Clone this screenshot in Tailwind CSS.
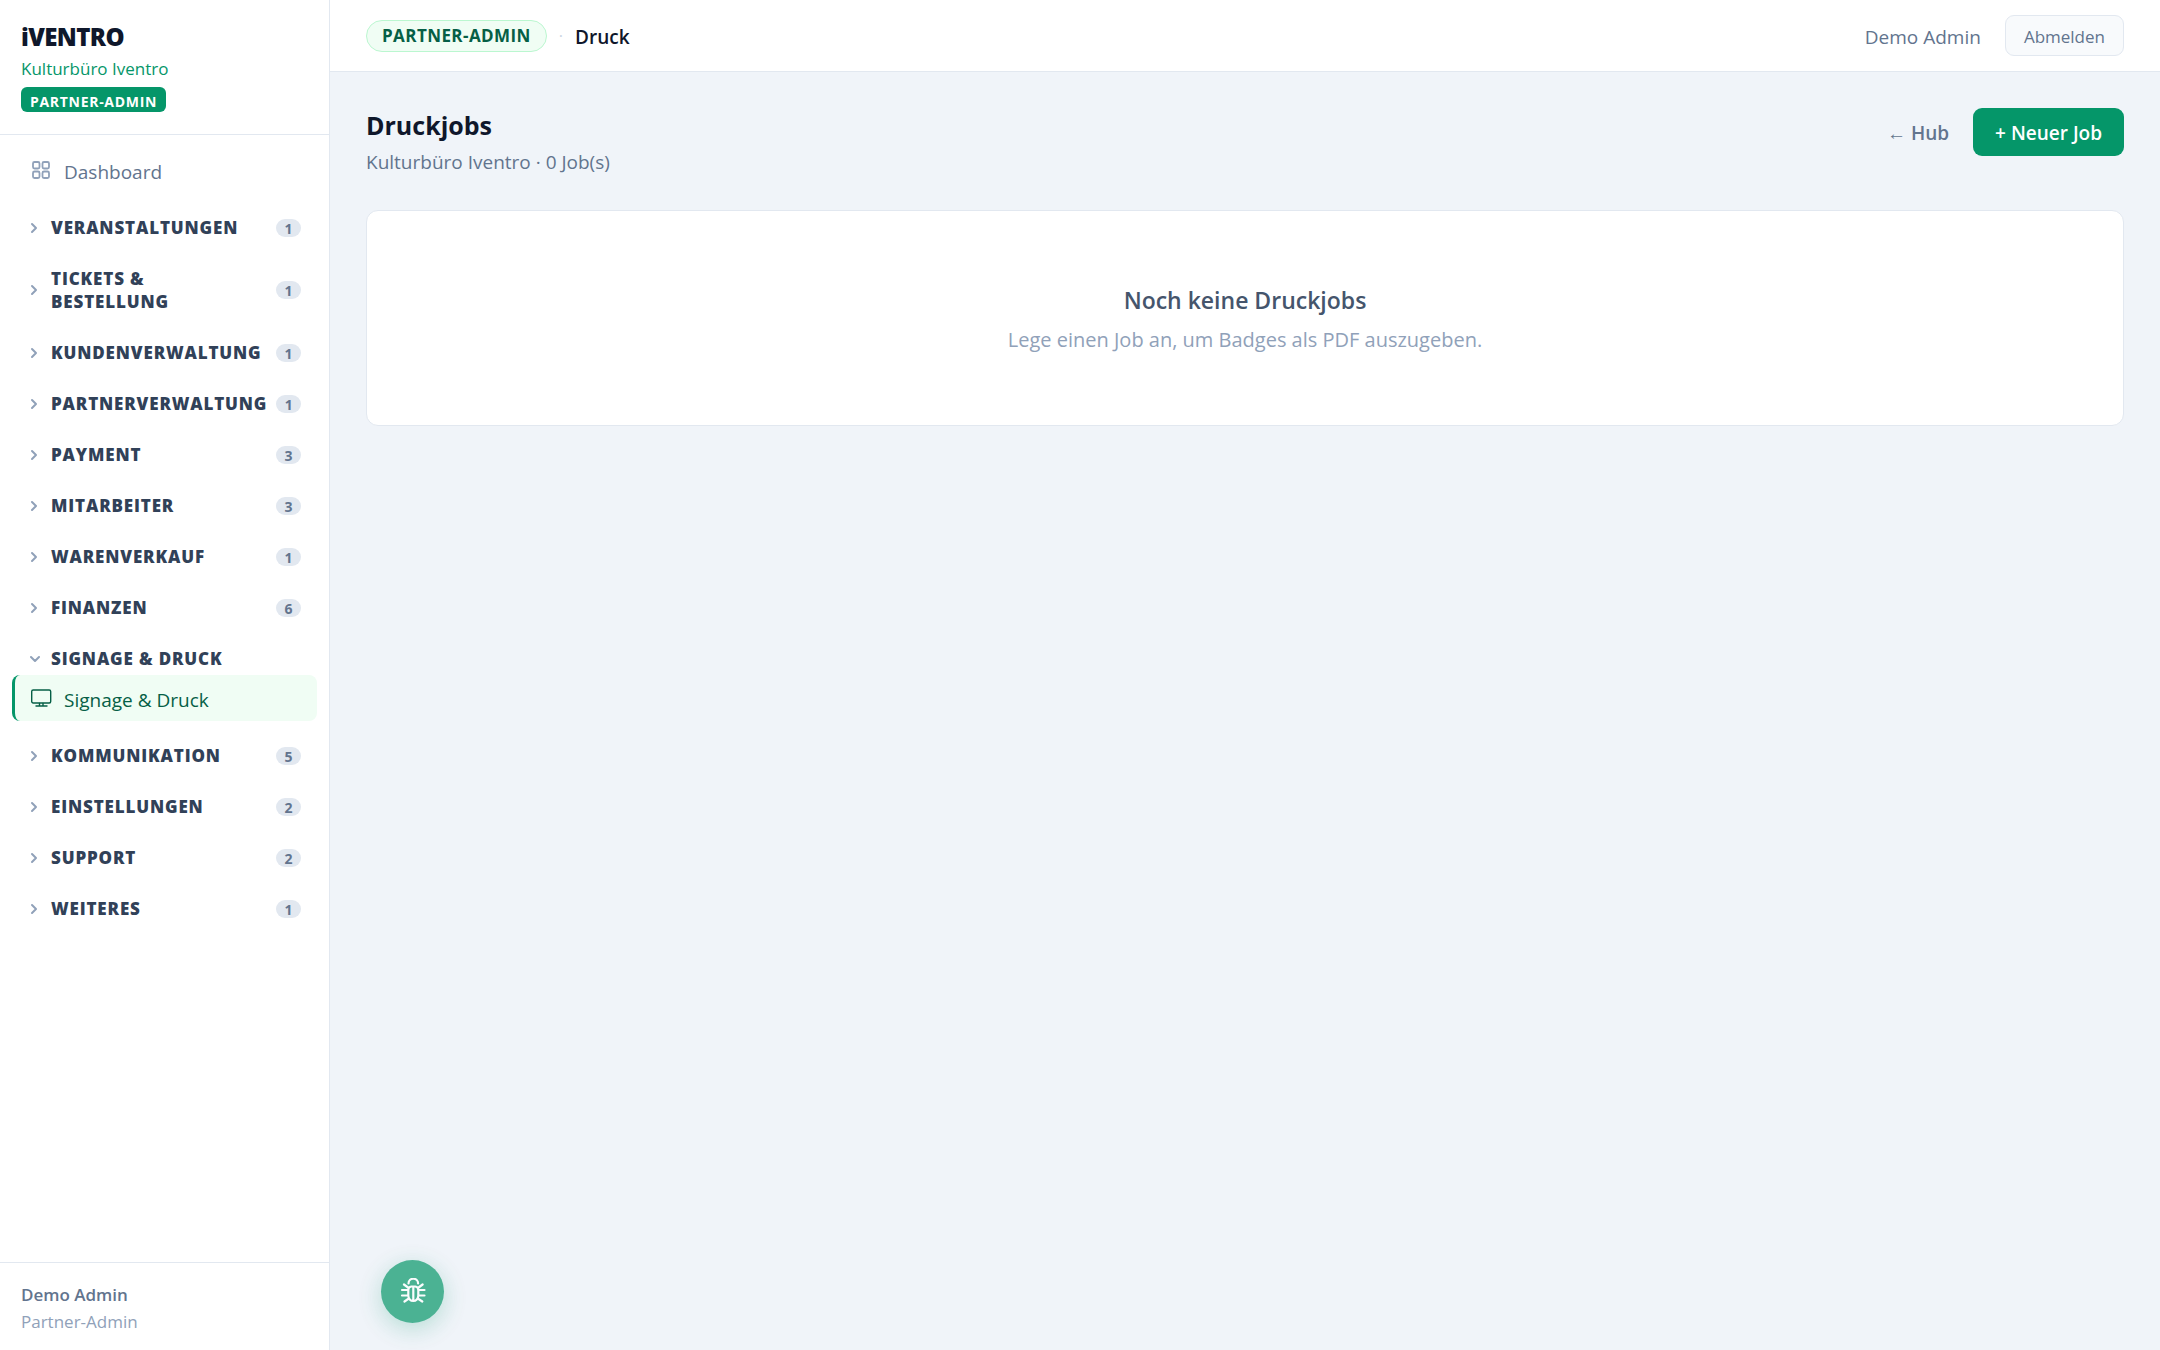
<!DOCTYPE html>
<html lang="de">
<head>
    <meta charset="UTF-8">
    <meta name="viewport" content="width=device-width, initial-scale=1.0">
    <title>Druckjobs – iVENTRO</title>
    <script src="https://cdn.jsdelivr.net/npm/@tailwindcss/browser@4"></script>
</head>
<body class="flex min-h-screen bg-[#f0f4f9] font-['Open_Sans',sans-serif] text-slate-900">
    <!-- Icons -->
    <svg class="hidden">
        <symbol id="chevron" viewBox="0 0 12 12">
            <path d="M2 2l4 4-4 4" fill="none" stroke="currentColor" stroke-width="2" stroke-linecap="round" stroke-linejoin="round"/>
        </symbol>
        <symbol id="chevron-down" viewBox="0 0 12 12">
            <path d="M1 4l4 4 4-4" fill="none" stroke="currentColor" stroke-width="2" stroke-linecap="round" stroke-linejoin="round"/>
        </symbol>
    </svg>

    <!-- Sidebar -->
    <aside class="flex w-[330px] shrink-0 flex-col border-r border-slate-200 bg-white">
        <div class="flex flex-col items-start border-b border-slate-200 px-[21px] pt-[21px] pb-[22px]">
            <div class="text-2xl leading-8 font-extrabold tracking-tight">iVENTRO</div>
            <div class="text-[17px] leading-8 font-medium text-[#059669]">Kulturbüro Iventro</div>
            <span class="mt-[2px] rounded-md bg-[#059669] px-[9px] pt-1 text-sm leading-[21px] font-bold tracking-wider text-white">PARTNER-ADMIN</span>
        </div>

        <nav class="flex flex-1 flex-col gap-[18px] px-3 pt-3">
            <a href="#" class="flex h-[46px] items-center gap-3 pl-[19px] text-[19px] font-medium text-slate-500">
                <svg class="size-[21px] text-slate-400" viewBox="0 0 21 21" fill="none" stroke="currentColor" stroke-width="1.8"><rect x="2" y="2" width="6.500" height="6.500" rx="1.500"/><rect x="11.500" y="2" width="6.500" height="6.500" rx="1.500"/><rect x="2" y="11.500" width="6.500" height="6.500" rx="1.500"/><rect x="11.500" y="11.500" width="6.500" height="6.500" rx="1.500"/></svg>
                <span class="pt-1">Dashboard</span>
            </a>
            <button class="flex items-center gap-[9px] py-[5px] pr-4 pl-[18px] text-left text-[17px] leading-[23px] font-extrabold tracking-wider text-slate-700">
                <svg class="size-3 shrink-0 text-slate-400"><use href="#chevron"/></svg>
                <span class="flex-1">VERANSTALTUNGEN</span>
                <span class="w-[25px] rounded-full bg-slate-200 pt-px text-center text-sm leading-[17px] font-bold tracking-normal text-slate-500">1</span>
            </button>
            <button class="flex items-center gap-[9px] py-[5px] pr-4 pl-[18px] text-left text-[17px] leading-[23px] font-extrabold tracking-wider text-slate-700">
                <svg class="size-3 shrink-0 text-slate-400"><use href="#chevron"/></svg>
                <span class="flex-1">TICKETS &amp;<br>BESTELLUNG</span>
                <span class="w-[25px] rounded-full bg-slate-200 pt-px text-center text-sm leading-[17px] font-bold tracking-normal text-slate-500">1</span>
            </button>
            <button class="flex items-center gap-[9px] py-[5px] pr-4 pl-[18px] text-left text-[17px] leading-[23px] font-extrabold tracking-wider text-slate-700">
                <svg class="size-3 shrink-0 text-slate-400"><use href="#chevron"/></svg>
                <span class="flex-1">KUNDENVERWALTUNG</span>
                <span class="w-[25px] rounded-full bg-slate-200 pt-px text-center text-sm leading-[17px] font-bold tracking-normal text-slate-500">1</span>
            </button>
            <button class="flex items-center gap-[9px] py-[5px] pr-4 pl-[18px] text-left text-[17px] leading-[23px] font-extrabold tracking-wider text-slate-700">
                <svg class="size-3 shrink-0 text-slate-400"><use href="#chevron"/></svg>
                <span class="flex-1">PARTNERVERWALTUNG</span>
                <span class="w-[25px] rounded-full bg-slate-200 pt-px text-center text-sm leading-[17px] font-bold tracking-normal text-slate-500">1</span>
            </button>
            <button class="flex items-center gap-[9px] py-[5px] pr-4 pl-[18px] text-left text-[17px] leading-[23px] font-extrabold tracking-wider text-slate-700">
                <svg class="size-3 shrink-0 text-slate-400"><use href="#chevron"/></svg>
                <span class="flex-1">PAYMENT</span>
                <span class="w-[25px] rounded-full bg-slate-200 pt-px text-center text-sm leading-[17px] font-bold tracking-normal text-slate-500">3</span>
            </button>
            <button class="flex items-center gap-[9px] py-[5px] pr-4 pl-[18px] text-left text-[17px] leading-[23px] font-extrabold tracking-wider text-slate-700">
                <svg class="size-3 shrink-0 text-slate-400"><use href="#chevron"/></svg>
                <span class="flex-1">MITARBEITER</span>
                <span class="w-[25px] rounded-full bg-slate-200 pt-px text-center text-sm leading-[17px] font-bold tracking-normal text-slate-500">3</span>
            </button>
            <button class="flex items-center gap-[9px] py-[5px] pr-4 pl-[18px] text-left text-[17px] leading-[23px] font-extrabold tracking-wider text-slate-700">
                <svg class="size-3 shrink-0 text-slate-400"><use href="#chevron"/></svg>
                <span class="flex-1">WARENVERKAUF</span>
                <span class="w-[25px] rounded-full bg-slate-200 pt-px text-center text-sm leading-[17px] font-bold tracking-normal text-slate-500">1</span>
            </button>
            <button class="flex items-center gap-[9px] py-[5px] pr-4 pl-[18px] text-left text-[17px] leading-[23px] font-extrabold tracking-wider text-slate-700">
                <svg class="size-3 shrink-0 text-slate-400"><use href="#chevron"/></svg>
                <span class="flex-1">FINANZEN</span>
                <span class="w-[25px] rounded-full bg-slate-200 pt-px text-center text-sm leading-[17px] font-bold tracking-normal text-slate-500">6</span>
            </button>
            <!-- Open group -->
            <div>
                <button class="flex w-full items-center gap-[9px] py-[5px] pr-4 pl-[18px] text-left text-[17px] leading-[23px] font-extrabold tracking-wider text-slate-700" aria-expanded="true">
                    <svg class="size-3 shrink-0 text-slate-400"><use href="#chevron-down"/></svg>
                    <span class="flex-1">SIGNAGE &amp; DRUCK</span>
                </button>
                <a href="#" class="flex h-[46px] items-center gap-3 rounded-lg border-l-3 border-[#059669] bg-[#f0fdf4] pl-4 text-[19px] font-medium text-[#065f46]">
                    <svg class="size-[21px]" viewBox="0 0 21 21" fill="none" stroke="currentColor" stroke-width="1.4" stroke-linecap="round"><rect x="0.700" y="2" width="19" height="13" rx="1.500"/><path d="M8.500 15.500v2M12 15.500v2M5 18h11"/></svg>
                    <span class="pt-1">Signage &amp; Druck</span>
                </a>
            </div>
            <button class="flex items-center gap-[9px] py-[5px] pr-4 pl-[18px] text-left text-[17px] leading-[23px] font-extrabold tracking-wider text-slate-700">
                <svg class="size-3 shrink-0 text-slate-400"><use href="#chevron"/></svg>
                <span class="flex-1">KOMMUNIKATION</span>
                <span class="w-[25px] rounded-full bg-slate-200 pt-px text-center text-sm leading-[17px] font-bold tracking-normal text-slate-500">5</span>
            </button>
            <button class="flex items-center gap-[9px] py-[5px] pr-4 pl-[18px] text-left text-[17px] leading-[23px] font-extrabold tracking-wider text-slate-700">
                <svg class="size-3 shrink-0 text-slate-400"><use href="#chevron"/></svg>
                <span class="flex-1">EINSTELLUNGEN</span>
                <span class="w-[25px] rounded-full bg-slate-200 pt-px text-center text-sm leading-[17px] font-bold tracking-normal text-slate-500">2</span>
            </button>
            <button class="flex items-center gap-[9px] py-[5px] pr-4 pl-[18px] text-left text-[17px] leading-[23px] font-extrabold tracking-wider text-slate-700">
                <svg class="size-3 shrink-0 text-slate-400"><use href="#chevron"/></svg>
                <span class="flex-1">SUPPORT</span>
                <span class="w-[25px] rounded-full bg-slate-200 pt-px text-center text-sm leading-[17px] font-bold tracking-normal text-slate-500">2</span>
            </button>
            <button class="flex items-center gap-[9px] py-[5px] pr-4 pl-[18px] text-left text-[17px] leading-[23px] font-extrabold tracking-wider text-slate-700">
                <svg class="size-3 shrink-0 text-slate-400"><use href="#chevron"/></svg>
                <span class="flex-1">WEITERES</span>
                <span class="w-[25px] rounded-full bg-slate-200 pt-px text-center text-sm leading-[17px] font-bold tracking-normal text-slate-500">1</span>
            </button>
        </nav>

        <div class="border-t border-slate-200 px-[21px] pt-[18px] pb-[15px] text-[17px] leading-[27px]">
            <div class="font-semibold text-slate-500">Demo Admin</div>
            <div class="text-slate-400">Partner-Admin</div>
        </div>
    </aside>

    <div class="flex min-w-0 flex-1 flex-col">
        <!-- Topbar -->
        <header class="flex h-[72px] items-center justify-between border-b border-slate-200 bg-white px-9">
            <div class="flex items-center gap-3">
                <span class="rounded-full border border-[#bbf7d0] bg-[#f0fdf4] px-[15px] text-[17px] leading-[30px] font-bold tracking-wide text-[#065f46]">PARTNER-ADMIN</span>
                <span class="text-slate-300">·</span>
                <span class="pt-[3px] text-[19px] font-semibold">Druck</span>
            </div>
            <div class="flex items-center gap-6">
                <span class="pt-[3px] text-[19px] text-slate-500">Demo Admin</span>
                <button class="h-[41px] rounded-[9px] border border-slate-200 bg-slate-50 px-[18px] pt-[3px] text-[17px] text-slate-500">Abmelden</button>
            </div>
        </header>

        <main class="px-9 pt-9">
            <div class="flex items-start justify-between">
                <div>
                    <h1 class="text-[25px] leading-[34px] font-bold">Druckjobs</h1>
                    <p class="mt-1 text-[19px] leading-8 text-slate-500">Kulturbüro Iventro · 0 Job(s)</p>
                </div>
                <div class="flex items-center gap-6">
                    <a href="#" class="pt-[2px] text-[19px] font-semibold text-slate-500">← Hub</a>
                    <button class="h-12 rounded-[9px] bg-[#059669] px-[22px] pt-[2px] text-[19px] font-semibold text-white">+ Neuer Job</button>
                </div>
            </div>

            <section class="mt-8 rounded-xl border border-slate-200 bg-white px-6 pt-[71px] pb-[69px] text-center">
                <h2 class="text-[23px] leading-9 font-semibold text-slate-600">Noch keine Druckjobs</h2>
                <p class="mt-[6px] text-xl leading-8 text-slate-400">Lege einen Job an, um Badges als PDF auszugeben.</p>
            </section>
        </main>
    </div>

    <!-- Bug report button -->
    <button aria-label="Fehler melden" class="fixed bottom-[27px] left-[381px] flex size-[63px] items-center justify-center rounded-full bg-[#059669] text-white opacity-70 shadow-[0_6px_24px_rgba(5,150,105,0.35)]">
        <svg class="size-[27px]" viewBox="0 0 27 27" fill="none" stroke="currentColor" stroke-width="2.2" stroke-linecap="round"><path d="M9.500 5.500a4.800 4.800 0 0 1 9.600 0M14.300 9v14M9.300 12q0-3 3-3.500h4q3 .5 3 3.500v5.500a5 5.500 0 0 1-10 0zM9 12H3M9 17.500H3M19.500 12h6M19.500 17.500h6M9 9.500 5 6.500M19.600 9.500l4-3M9.800 20.500 5.500 23.500M18.800 20.500l4.500 3"/></svg>
    </button>
</body>
</html>
